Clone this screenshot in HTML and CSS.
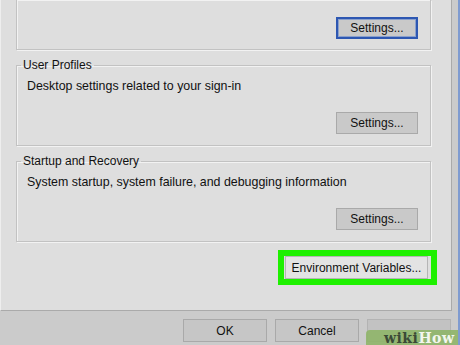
FILE: index.html
```html
<!DOCTYPE html>
<html lang="en">
<head>
    <meta charset="UTF-8">
    <meta name="viewport" content="width=device-width, initial-scale=1.0">
    <title>System Properties - Advanced</title>
    <link rel="stylesheet" href="styles.css">
</head>
<body>
    <div class="window">
        <div class="panel">
            <fieldset class="group cut">
                <button class="btn focused">Settings...</button>
            </fieldset>

            <fieldset class="group">
                <legend>User Profiles</legend>
                <p>Desktop settings related to your sign-in</p>
                <button class="btn">Settings...</button>
            </fieldset>

            <fieldset class="group">
                <legend>Startup and Recovery</legend>
                <p>System startup, system failure, and debugging information</p>
                <button class="btn">Settings...</button>
            </fieldset>

            <div class="env-row">
                <div class="highlight">
                    <button class="btn env">Environment Variables...</button>
                </div>
            </div>
        </div>

        <div class="actions">
            <button class="btn">OK</button>
            <button class="btn">Cancel</button>
            <!-- Apply is disabled and hidden under the watermark -->
            <button class="btn disabled" aria-label="Apply" disabled></button>
        </div>

        <div class="watermark"><span class="wiki">wiki</span><span class="how">How</span></div>
    </div>
</body>
</html>
```

FILE: styles.css
```css
body {
    margin: 0;
    background-color: #cbcbcb;
    font-family: "Liberation Sans", Arial, sans-serif;
    font-size: 12px;
    color: #111;
}
.window {
    position: relative;
    width: 460px;
    height: 345px;
    overflow: hidden;
    border-right: 2px solid #7f9bd0;
    box-sizing: border-box;
}
.panel {
    width: 452px;
    height: 311px;
    box-sizing: border-box;
    background-color: #dedede;
    border-left: 1px solid #eeeeee;
    border-right: 1px solid #aaaaaa;
    border-bottom: 1px solid #aaaaaa;
    display: flex;
    flex-direction: column;
    align-items: flex-start;
}
.group {
    width: 415px;
    box-sizing: border-box;
    margin: 8px 0 0 15px;
    padding: 0 12px 11px 10px;
    border: 1px solid #c2c2c2;
    box-shadow: inset 1px 1px 0 #f2f2f2, 1px 1px 0 #f2f2f2;
    display: flex;
    flex-direction: column;
    min-width: 0;
}
.group.cut {
    margin-top: 0;
    border-top: none;
    padding-top: 17px;
    padding-bottom: 10px;
}
legend {
    margin-left: -6px;
    padding: 0 2px;
    line-height: 15px;
}
.group p {
    margin: 6px 0 0;
    line-height: 15px;
    font-size: 12.4px;
}
.btn {
    font-family: "Liberation Sans", Arial, sans-serif;
    font-size: 12px;
    color: #111;
    height: 22px;
    width: 82px;
    padding: 0;
    background-color: #c9c9c9;
    border: 1px solid #a9a9a9;
    border-radius: 0;
}
.group .btn {
    align-self: flex-end;
    margin-top: 18px;
}
.group.cut .btn {
    margin-top: 0;
}
.btn.focused {
    border: 2px solid #2d57b2;
    box-shadow: inset 0 0 0 1px #8aa0cc;
}
.env-row {
    align-self: flex-end;
    margin: 8px 14px 0 0;
}
.highlight {
    border: 6px solid #1ef000;
    padding: 0 3px 0 1px;
}
.btn.env {
    display: block;
    width: 143px;
    height: 23px;
    background-color: #e3e3e3;
    border-color: #b5b5b5;
}
.actions {
    display: flex;
    gap: 8px;
    margin: 8px 0 0 183px;
}
.actions .btn {
    width: 84px;
    height: 23px;
    background-color: #c6c6c6;
}
.btn.disabled {
    background-color: #c2c2c2;
    border-color: #b3b3b3;
}
.watermark {
    position: absolute;
    right: 0;
    bottom: 0;
    width: 74px;
    height: 15px;
    padding-left: 18px;
    background-color: rgba(140, 180, 100, 0.85);
    border-top-left-radius: 4px;
    font-family: "DejaVu Serif", "Liberation Serif", serif;
    font-weight: bold;
    font-size: 14px;
    line-height: 16px;
    letter-spacing: 0.5px;
}
.watermark .wiki {
    color: #3b4a37;
}
.watermark .how {
    color: #f3f6ee;
}
```
